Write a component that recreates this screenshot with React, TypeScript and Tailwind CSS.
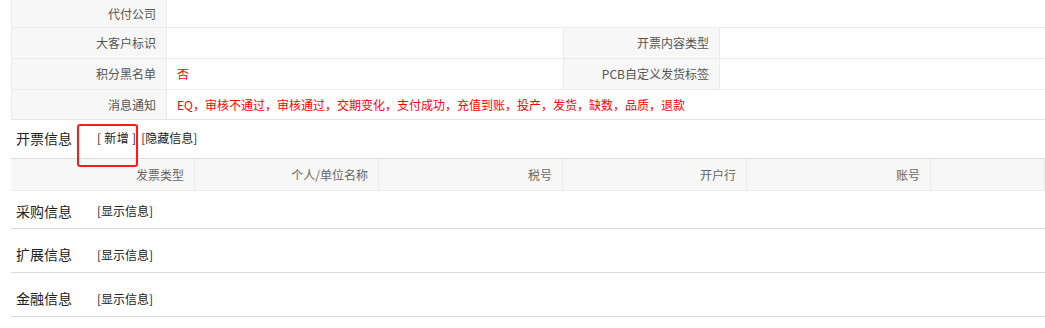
const FONT = "font-['Microsoft_YaHei','Noto_Sans_CJK_SC',sans-serif]";

const invoiceCols = ["发票类型", "个人/单位名称", "税号", "开户行", "账号", ""];

const extraSections = [
  { title: "采购信息", h: "h-[38px]", pt: "pt-[3px]" },
  { title: "扩展信息", h: "h-[44px]", pt: "pt-[8px]" },
  { title: "金融信息", h: "h-[44px]", pt: "pt-[8px]" },
];

export default function App() {
  return (
    <div className={`relative w-[1045px] h-[328px] overflow-hidden bg-white ${FONT}`}>
      {/* basic info table */}
      <div className="ml-[11px] border-l border-[#ececec] grid grid-cols-[155px_397px_156px_1fr]">
        <div className="h-[28px] flex items-center justify-end bg-[#f7f7f7] border-r border-b border-[#ececec] pr-[10px] text-[12px] text-[#555]">
          代付公司
        </div>
        <div className="col-span-3 border-b border-[#ececec]" />

        <div className="h-[31px] flex items-center justify-end bg-[#f7f7f7] border-r border-b border-[#ececec] pr-[10px] text-[12px] text-[#555]">
          大客户标识
        </div>
        <div className="border-b border-r border-[#ececec]" />
        <div className="flex items-center justify-end bg-[#f7f7f7] border-r border-b border-[#ececec] pr-[10px] text-[12px] text-[#555]">
          开票内容类型
        </div>
        <div className="border-b border-[#ececec]" />

        <div className="h-[31px] flex items-center justify-end bg-[#f7f7f7] border-r border-b border-[#ececec] pr-[10px] text-[12px] text-[#555]">
          积分黑名单
        </div>
        <div className="flex items-center border-b border-r border-[#ececec] pl-[10px] text-[12px] text-[#ff0000]">
          否
        </div>
        <div className="flex items-center justify-end bg-[#f7f7f7] border-r border-b border-[#ececec] pr-[10px] text-[12px] text-[#555]">
          PCB自定义发货标签
        </div>
        <div className="border-b border-[#ececec]" />

        <div className="h-[30px] flex items-center justify-end bg-[#f7f7f7] border-r border-b border-[#e6e6e6] pr-[10px] text-[12px] text-[#555]">
          消息通知
        </div>
        <div className="col-span-3 flex items-center border-b border-[#e6e6e6] pl-[10px] text-[12px] text-[#ff0000]">
          EQ，审核不通过，审核通过，交期变化，支付成功，充值到账，投产，发货，缺数，品质，退款
        </div>
      </div>

      {/* invoice section */}
      <div className="h-[38px] flex items-center pl-[16px] pb-[2px] text-[#222]">
        <span className="w-[81px] text-[14px]">开票信息</span>
        <span className="text-[12px] tracking-[0.3px]">[ 新增 ]</span>
        <span className="ml-[5px] text-[12px]">[隐藏信息]</span>
      </div>

      <div className="ml-[11px] h-[33px] grid grid-cols-[184px_184px_184px_184px_184px_1fr] bg-[#f7f7f7] border-t border-[#dcdcdc] border-b border-b-[#ececec]">
        {invoiceCols.map((c, i) => (
          <div
            key={i}
            className="flex items-center justify-end pr-[10px] border-r border-[#ececec] text-[12px] text-[#666]"
          >
            {c}
          </div>
        ))}
      </div>

      {extraSections.map((s) => (
        <div
          key={s.title}
          className={`ml-[11px] ${s.h} ${s.pt} flex items-center pl-[5px] border-b border-[#dcdcdc]`}
        >
          <span className="w-[81px] text-[14px] text-[#222]">{s.title}</span>
          <span className="text-[12px] text-[#222]">[显示信息]</span>
        </div>
      ))}

      {/* red highlight annotation */}
      <div className="absolute left-[77px] top-[124px] w-[61px] h-[43px] border-2 border-[#ff1a1a] rounded-[3px]" />
    </div>
  );
}
